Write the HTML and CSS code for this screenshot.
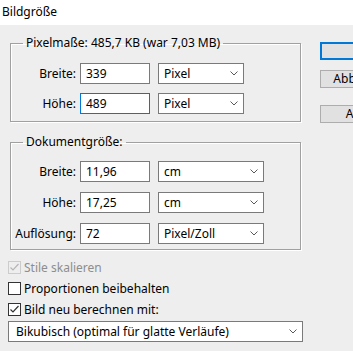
FILE: index.html
```html
<!DOCTYPE html>
<html>
<head>
<meta charset="utf-8">
<title>Bildgröße</title>
<link rel="stylesheet" href="styles.css">
</head>
<body>
<div class="titlebar">Bildgröße</div>

<div class="dialog">
  <div class="main">
    <fieldset class="group first">
      <legend>Pixelmaße: 485,7 KB (war 7,03 MB)</legend>
      <div class="row">
        <label>Breite:</label>
        <input class="field" type="text" value="339">
        <div class="combo short"><span>Pixel</span><svg width="8" height="5" viewBox="0 0 8 5"><path d="M0.5 0.5 L4 4 L7.5 0.5" fill="none" stroke="#5a5a5a" stroke-width="1"/></svg></div>
      </div>
      <div class="row">
        <label>Höhe:</label>
        <input class="field focused" type="text" value="489">
        <div class="combo short"><span>Pixel</span><svg width="8" height="5" viewBox="0 0 8 5"><path d="M0.5 0.5 L4 4 L7.5 0.5" fill="none" stroke="#5a5a5a" stroke-width="1"/></svg></div>
      </div>
    </fieldset>

    <fieldset class="group second">
      <legend>Dokumentgröße:</legend>
      <div class="row">
        <label>Breite:</label>
        <input class="field" type="text" value="11,96">
        <div class="combo"><span>cm</span><svg width="8" height="5" viewBox="0 0 8 5"><path d="M0.5 0.5 L4 4 L7.5 0.5" fill="none" stroke="#5a5a5a" stroke-width="1"/></svg></div>
      </div>
      <div class="row">
        <label>Höhe:</label>
        <input class="field" type="text" value="17,25">
        <div class="combo"><span>cm</span><svg width="8" height="5" viewBox="0 0 8 5"><path d="M0.5 0.5 L4 4 L7.5 0.5" fill="none" stroke="#5a5a5a" stroke-width="1"/></svg></div>
      </div>
      <div class="row">
        <label>Auflösung:</label>
        <input class="field" type="text" value="72">
        <div class="combo"><span>Pixel/Zoll</span><svg width="8" height="5" viewBox="0 0 8 5"><path d="M0.5 0.5 L4 4 L7.5 0.5" fill="none" stroke="#5a5a5a" stroke-width="1"/></svg></div>
      </div>
    </fieldset>

    <div class="checks">
      <div class="check disabled"><span class="box"><svg width="11" height="11" viewBox="0 0 11 11"><path d="M1.5 5.5 L4 8 L9.5 2" fill="none" stroke="#b5b5b5" stroke-width="1.2"/></svg></span>Stile skalieren</div>
      <div class="check"><span class="box"></span>Proportionen beibehalten</div>
      <div class="check"><span class="box"><svg width="11" height="11" viewBox="0 0 11 11"><path d="M1.5 5.5 L4 8 L9.5 2" fill="none" stroke="#333" stroke-width="1.2"/></svg></span>Bild neu berechnen mit:</div>
    </div>

    <div class="combo wide"><span>Bikubisch (optimal für glatte Verläufe)</span><svg width="8" height="5" viewBox="0 0 8 5"><path d="M0.5 0.5 L4 4 L7.5 0.5" fill="none" stroke="#5a5a5a" stroke-width="1"/></svg></div>
  </div>

  <div class="buttons">
    <button class="btn default">OK</button>
    <button class="btn">Abbrechen</button>
    <button class="btn auto">Auto...</button>
  </div>
</div>
</body>
</html>
```

FILE: styles.css
```css
body {
   margin: 0;
   background-color: #eeeeee;
   font-family: "Noto Sans", "Open Sans", sans-serif;
   font-size: 12px;
   color: #000;
   overflow: hidden;
}

.titlebar {
   height: 25px;
   background: #fff;
   padding-left: 2px;
   line-height: 24px;
   box-sizing: border-box;
}

.dialog {
   display: flex;
   padding-left: 8px;
}

.main {
   width: 295px;
   flex: none;
   padding-top: 10px;
}

.group {
   margin: 0 0 0 2px;
   width: 291px;
   box-sizing: border-box;
   border: 1px solid #a0a0a0;
   box-shadow: 1px 1px 0 #fff, inset 1px 1px 0 #fff;
   padding: 12px 0 7px 0;
   display: flex;
   flex-direction: column;
   gap: 9px;
}

.group legend {
   margin-left: 12px;
   padding: 0 3px;
   line-height: 16px;
}

.group.second {
   margin-top: 12px;
   padding-top: 11px;
   padding-bottom: 5px;
   gap: 10px;
}

.row {
   display: flex;
   align-items: center;
   height: 21px;
}

.row label {
   width: 65px;
   margin-right: 4px;
   text-align: right;
}

.field {
   width: 70px;
   height: 21px;
   box-sizing: border-box;
   margin: 0 8px 0 0;
   border: 1px solid #7a7a7a;
   background: #fff;
   padding: 0 0 0 5px;
   font: inherit;
   color: #000;
   outline: none;
}

.field.focused {
   border-color: #0078d7;
}

.combo {
   display: flex;
   align-items: center;
   justify-content: space-between;
   width: 106px;
   height: 21px;
   box-sizing: border-box;
   border: 1px solid #7a7a7a;
   background: #fff;
   padding: 0 5px 0 5px;
}

.combo.short {
   width: 86px;
}

.combo svg {
   flex: none;
}

.combo.wide {
   width: 295px;
   padding-left: 7px;
   margin-top: 1px;
}

.checks {
   margin-top: 7px;
}

.check {
   display: flex;
   align-items: center;
   height: 21px;
}

.check .box {
   width: 13px;
   height: 13px;
   box-sizing: border-box;
   border: 1px solid #333;
   background: #fff;
   margin-right: 3px;
   display: flex;
   align-items: center;
   justify-content: center;
}

.check.disabled {
   color: #8d8d8d;
}

.check.disabled .box {
   border-color: #cccccc;
   background: transparent;
}

.buttons {
   display: flex;
   flex-direction: column;
   margin-left: 17px;
   padding-top: 17px;
}

.btn {
   width: 88px;
   height: 18px;
   flex: none;
   box-sizing: border-box;
   border: 1px solid #adadad;
   background: #e1e1e1;
   font: inherit;
   color: #000;
   padding: 0;
   line-height: 14px;
   margin-bottom: 10px;
}

.btn.default {
   border: 2px solid #0078d7;
}

.btn.auto {
   margin-top: 7px;
}
```
